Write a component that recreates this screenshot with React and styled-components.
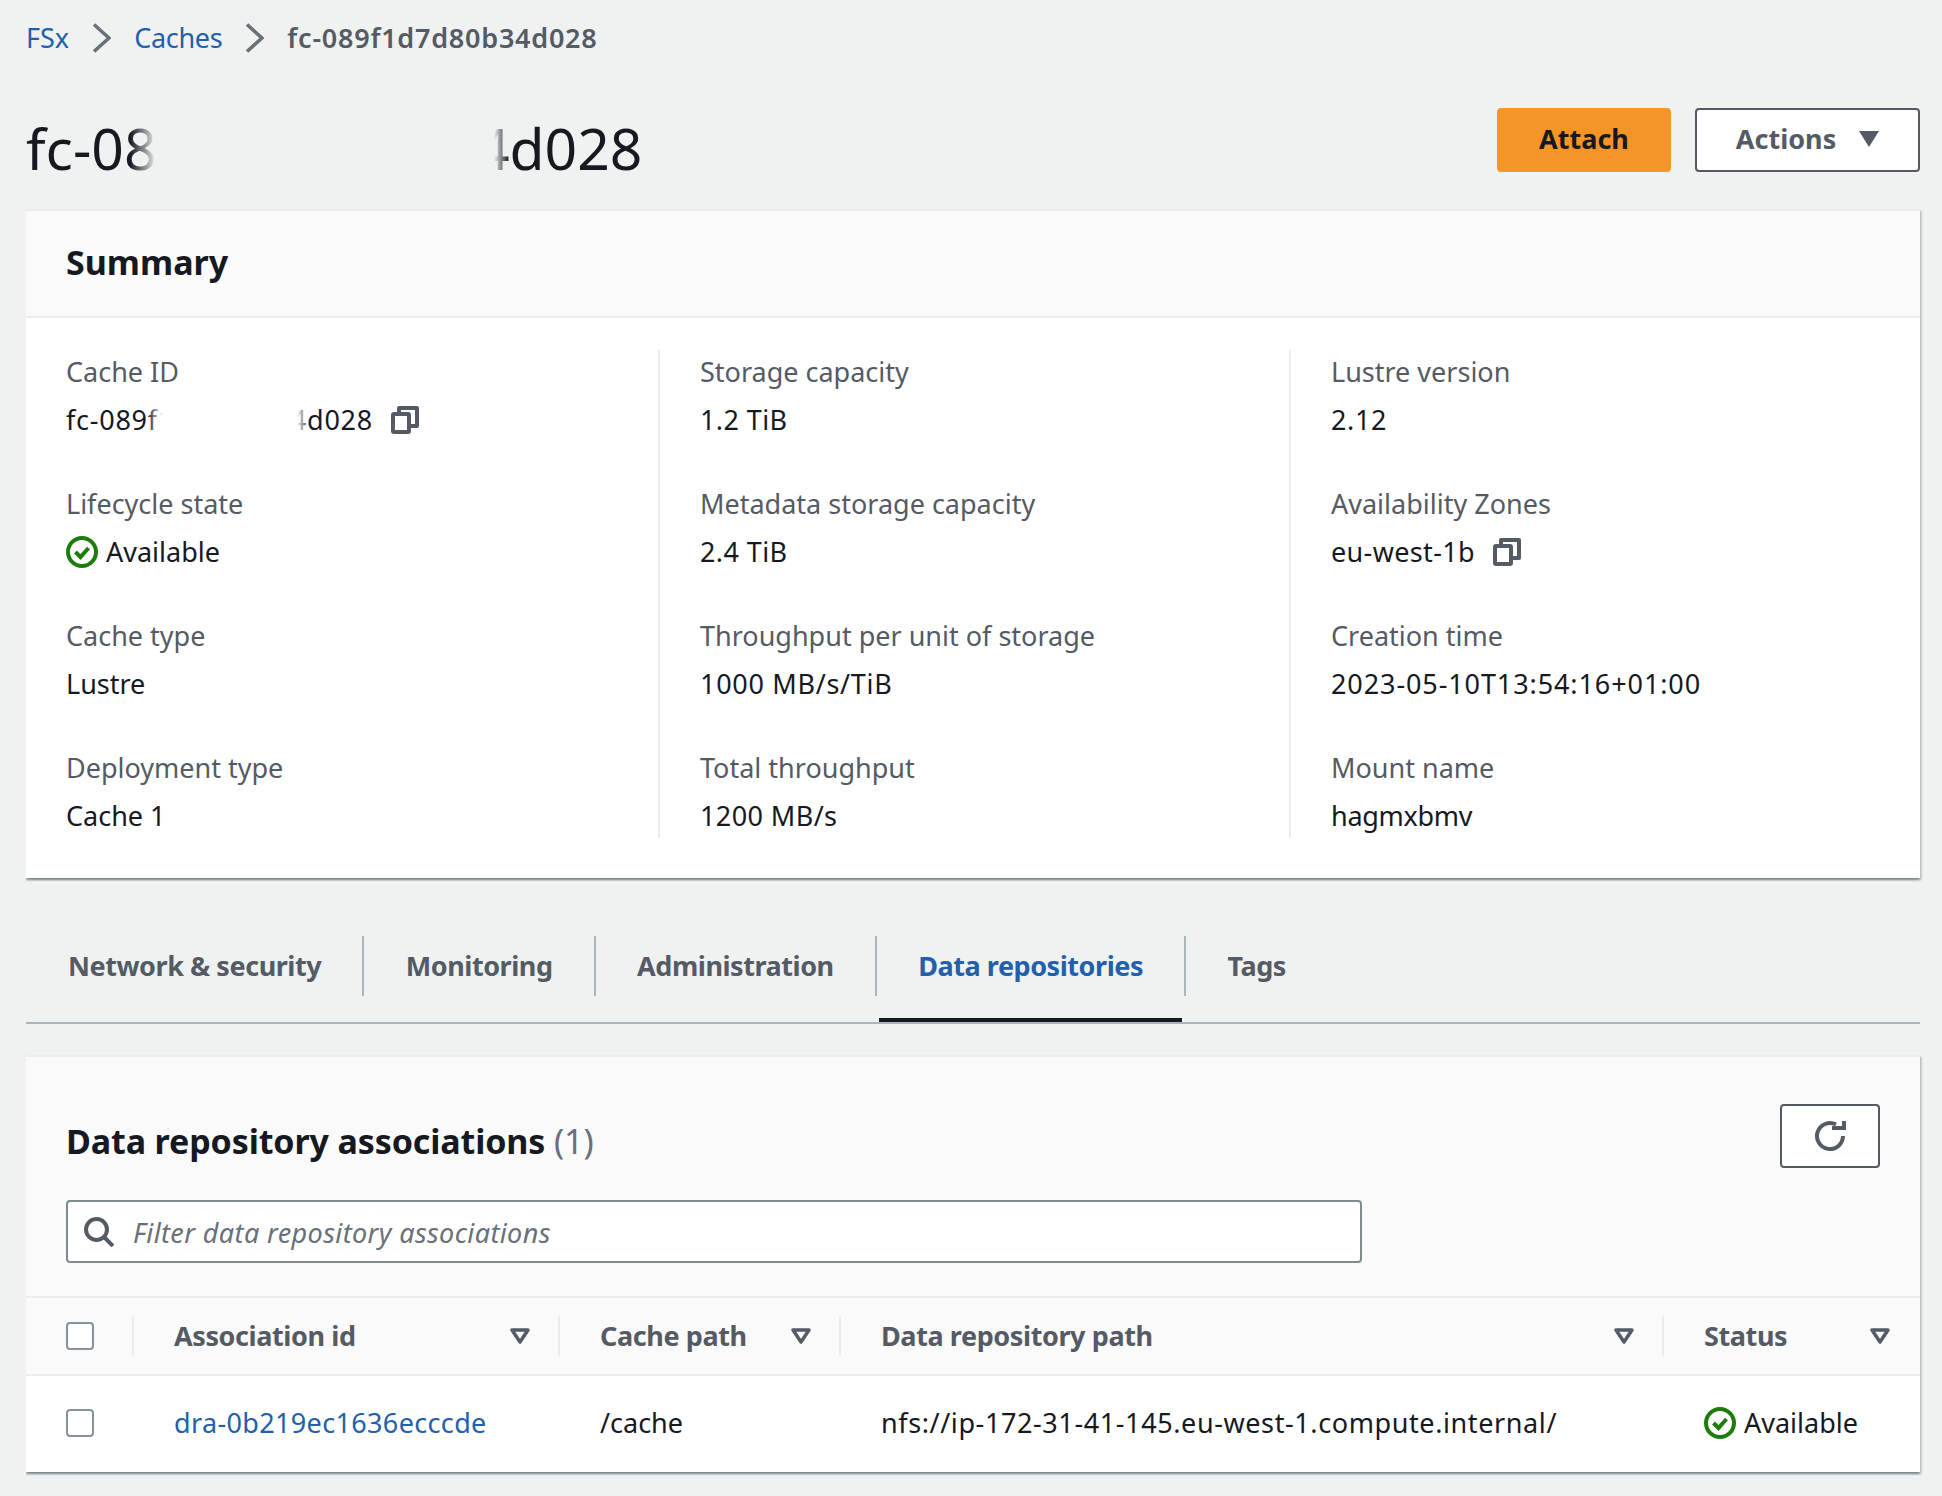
import styled, { createGlobalStyle } from 'styled-components'

const GlobalStyle = createGlobalStyle`
  html, body {
    margin: 0;
    background: #f0f2f2;
  }
  body {
    font-family: "Noto Sans", Roboto, Arial, sans-serif;
    font-size: 27px;
    line-height: 40px;
    color: #16191f;
  }
`

const CopyIcon = () => (
  <CopyGlyph viewBox="0 0 28 28" fill="none" stroke="#545b64" strokeWidth="4" strokeLinejoin="round">
    <path d="M8 7V2h18v18h-7" />
    <rect x="2" y="8" width="16" height="18" rx="1" />
  </CopyGlyph>
)

const StatusOk = () => (
  <StatusGlyph viewBox="0 0 32 32" fill="none" stroke="#1d7d0a">
    <circle cx="16" cy="16" r="14" strokeWidth="4" />
    <path d="M9.5 16l5 5 8-9" strokeWidth="4" />
  </StatusGlyph>
)

const FilterIcon = () => (
  <FilterGlyph viewBox="0 0 20 16" fill="none" stroke="#545b64" strokeWidth="3.4" strokeLinejoin="round">
    <path d="M2 2h16l-8 12z" />
  </FilterGlyph>
)

const Chevron = () => (
  <ChevronGlyph viewBox="0 0 19 30" fill="none" stroke="#687078" strokeWidth="3.6">
    <path d="M2 1.5L17 15 2 28.5" />
  </ChevronGlyph>
)

const summary = [
  [
    { label: 'Cache ID', value: 'fc-089f1d7d80b34d028', kind: 'secret', track: 0.75 },
    { label: 'Lifecycle state', value: 'Available', kind: 'status' },
    { label: 'Cache type', value: 'Lustre' },
    { label: 'Deployment type', value: 'Cache 1' },
  ],
  [
    { label: 'Storage capacity', value: '1.2 TiB', track: 0.4 },
    { label: 'Metadata storage capacity', value: '2.4 TiB', track: 0.4 },
    { label: 'Throughput per unit of storage', value: '1000 MB/s/TiB', track: 0.7 },
    { label: 'Total throughput', value: '1200 MB/s', track: 0.4 },
  ],
  [
    { label: 'Lustre version', value: '2.12', track: 0.6 },
    { label: 'Availability Zones', value: 'eu-west-1b', kind: 'copy', track: 0.35 },
    { label: 'Creation time', value: '2023-05-10T13:54:16+01:00', track: 0.9 },
    { label: 'Mount name', value: 'hagmxbmv', track: -0.3 },
  ],
]

const tabs = ['Network & security', 'Monitoring', 'Administration', 'Data repositories', 'Tags']

const columns = [
  { title: 'Association id', width: 426, inset: 28 },
  { title: 'Cache path', width: 281, inset: 28 },
  { title: 'Data repository path', width: 823, inset: 28 },
  { title: 'Status', width: 258, inset: 30 },
]

const renderValue = ({ value, kind, track }) => {
  if (kind === 'status') {
    return (
      <ValueRow>
        <StatusOk />
        {value}
      </ValueRow>
    )
  }
  if (kind === 'secret') {
    return (
      <ValueRow $track={track}>
        <Masked>
          {value}
          <IdMask />
        </Masked>
        <CopyIcon />
      </ValueRow>
    )
  }
  if (kind === 'copy') {
    return (
      <ValueRow $track={track}>
        {value}
        <CopyIcon />
      </ValueRow>
    )
  }
  return <ValueRow $track={track}>{value}</ValueRow>
}

export default function App() {
  return (
    <Page>
      <GlobalStyle />
      <Breadcrumbs>
        <Crumb>FSx</Crumb>
        <Chevron />
        <Crumb $track={-0.3}>Caches</Crumb>
        <Chevron />
        <CurrentCrumb>fc-089f1d7d80b34d028</CurrentCrumb>
      </Breadcrumbs>

      <TitleBar>
        <Title>
          fc-089f1d7d80b34d028
          <TitleMask />
        </Title>
        <Actions>
          <PrimaryButton>Attach</PrimaryButton>
          <DropdownButton>
            Actions
            <Caret viewBox="0 0 20 16">
              <path d="M0 0h20L10 16z" fill="#545b64" />
            </Caret>
          </DropdownButton>
        </Actions>
      </TitleBar>

      <Panel>
        <PanelHeader>Summary</PanelHeader>
        <SummaryGrid>
          {summary.map((col, i) => (
            <SummaryColumn key={i}>
              {col.map((item) => (
                <div key={item.label}>
                  <Label>{item.label}</Label>
                  {renderValue(item)}
                </div>
              ))}
            </SummaryColumn>
          ))}
        </SummaryGrid>
      </Panel>

      <TabBar>
        {tabs.map((tab) => (
          <Tab key={tab} $active={tab === 'Data repositories'}>
            <TabLabel $active={tab === 'Data repositories'}>{tab}</TabLabel>
          </Tab>
        ))}
      </TabBar>

      <Panel>
        <TableHeader>
          <TableHeadTop>
            <TableTitle>
              Data repository associations <Count>(1)</Count>
            </TableTitle>
            <RefreshButton>
              <svg width="32" height="32" viewBox="0 0 32 32" fill="none" stroke="#545b64" strokeWidth="4">
                <path d="M29 16A13 13 0 1 1 22 4.5" />
                <path d="M18 8h12V1" strokeWidth="4" />
              </svg>
            </RefreshButton>
          </TableHeadTop>
          <FilterBox>
            <svg width="30" height="30" viewBox="0 0 30 30" fill="none" stroke="#545b64" strokeWidth="4">
              <circle cx="12.5" cy="12.5" r="10.5" />
              <path d="M20 20l9 9" />
            </svg>
            <Placeholder>Filter data repository associations</Placeholder>
          </FilterBox>
        </TableHeader>
        <HeadRow>
          <SelectCell>
            <Checkbox />
          </SelectCell>
          {columns.map((c) => (
            <HeadCell key={c.title} $width={c.width} $inset={c.inset}>
              {c.title}
              <FilterIcon />
            </HeadCell>
          ))}
        </HeadRow>
        <BodyRow>
          <SelectCell>
            <Checkbox />
          </SelectCell>
          <BodyCell $width={426}>
            <Crumb $track={0.35}>dra-0b219ec1636ecccde</Crumb>
          </BodyCell>
          <BodyCell $width={281}>/cache</BodyCell>
          <BodyCell $width={823} $track={0.6}>nfs://ip-172-31-41-145.eu-west-1.compute.internal/</BodyCell>
          <BodyCell $width={258}>
            <ValueRow>
              <StatusOk />
              Available
            </ValueRow>
          </BodyCell>
        </BodyRow>
      </Panel>
    </Page>
  )
}

const Page = styled.div`
  width: 1894px;
  margin-left: 26px;
  height: 1496px;
  overflow: hidden;
  padding-right: 22px;
`

const Breadcrumbs = styled.nav`
  display: flex;
  align-items: center;
  gap: 23px;
  height: 40px;
  padding-top: 18px;
`

const Crumb = styled.a`
  color: #2260ab;
  letter-spacing: ${(p) => p.$track || 0}px;
`

const CurrentCrumb = styled.span`
  color: #545b64;
  font-weight: 600;
  letter-spacing: 0.75px;
`

const ChevronGlyph = styled.svg`
  width: 19px;
  height: 30px;
`

const TitleBar = styled.header`
  display: flex;
  justify-content: space-between;
  margin-top: 50px;
  height: 101px;
`

const Title = styled.h1`
  position: relative;
  margin: 0;
  padding-top: 8px;
  height: 64px;
  font-size: 57px;
  line-height: 64px;
  font-weight: 400;
`

const TitleMask = styled.span`
  position: absolute;
  left: 104px;
  top: 0;
  width: 379px;
  height: 100%;
  background: linear-gradient(to right, rgba(240, 242, 242, 0), #f0f2f2 7%, #f0f2f2 96%, rgba(240, 242, 242, 0));
`

const Actions = styled.div`
  display: flex;
  gap: 24px;
  align-items: flex-start;
`

const PrimaryButton = styled.button`
  width: 174px;
  height: 64px;
  padding: 0 0 2px;
  border: 0;
  border-radius: 4px;
  background: #f59527;
  color: #16191f;
  font: 700 27px/40px "Noto Sans", sans-serif;
`

const DropdownButton = styled.button`
  display: flex;
  align-items: center;
  justify-content: center;
  gap: 23px;
  width: 225px;
  height: 64px;
  padding: 0 0 2px;
  border: 2px solid #545b64;
  border-radius: 4px;
  background: #fff;
  color: #545b64;
  font: 700 27px/40px "Noto Sans", sans-serif;
`

const Caret = styled.svg`
  width: 20px;
  height: 16px;
`

const Panel = styled.section`
  background: #fff;
  border-top: 2px solid #eaeded;
  box-shadow: 0 2px 2px rgba(0, 28, 36, 0.3), 2px 2px 2px rgba(0, 28, 36, 0.15), -2px 2px 2px rgba(0, 28, 36, 0.15);
`

const PanelHeader = styled.h2`
  margin: 0;
  height: 105px;
  padding: 0 40px;
  background: #fafafa;
  border-bottom: 2px solid #eaeded;
  font-size: 34px;
  line-height: 103px;
  font-weight: 700;
`

const SummaryGrid = styled.div`
  display: grid;
  grid-template-columns: 632px 631px 1fr;
  padding: 32px 0 40px;
`

const SummaryColumn = styled.div`
  display: flex;
  flex-direction: column;
  gap: 44px;
  padding: 2px 0 2px 40px;

  & + & {
    border-left: 2px solid #eaeded;
  }
`

const Label = styled.div`
  margin-bottom: 8px;
  color: #545b64;
`

const ValueRow = styled.div`
  display: flex;
  align-items: center;
  gap: 8px;
  letter-spacing: ${(p) => p.$track || 0}px;
`

const Masked = styled.span`
  position: relative;
`

const IdMask = styled.span`
  position: absolute;
  left: 81px;
  top: 0;
  width: 163px;
  height: 100%;
  background: linear-gradient(to right, rgba(255, 255, 255, 0), #fff 10%, #fff 92%, rgba(255, 255, 255, 0));
`

const CopyGlyph = styled.svg`
  width: 28px;
  height: 28px;
  margin-left: 10px;
`

const StatusGlyph = styled.svg`
  width: 32px;
  height: 32px;
`

const TabBar = styled.div`
  display: flex;
  height: 146px;
  padding-top: 58px;
  box-sizing: border-box;
  border-bottom: 2px solid #aab7b8;
  margin-bottom: 31px;
`

const Tab = styled.div`
  position: relative;
  height: 60px;
  padding: 0 41px 0 41.5px;
  color: #545b64;
  font-weight: 700;
  line-height: 60px;
  letter-spacing: -0.45px;

  &:first-child {
    padding-left: 42px;
  }

  & + & {
    border-left: 2px solid #aab7b8;
  }
`

const TabLabel = styled.span`
  color: ${(p) => (p.$active ? '#2260ab' : '#545b64')};

  &::after {
    content: '';
    display: ${(p) => (p.$active ? 'block' : 'none')};
    position: absolute;
    left: 2px;
    right: 2px;
    top: 82px;
    height: 4px;
    background: #16191f;
  }
`

const TableHeader = styled.div`
  background: #fafafa;
  padding: 47px 40px 33px;
  border-bottom: 2px solid #eaeded;
`

const TableHeadTop = styled.div`
  display: flex;
  justify-content: space-between;
  align-items: flex-start;
  height: 96px;
`

const TableTitle = styled.h2`
  margin: 11px 0 0;
  font-size: 34px;
  line-height: 52px;
  font-weight: 700;
  letter-spacing: -0.12px;
`

const Count = styled.span`
  color: #687078;
  font-weight: 400;
`

const RefreshButton = styled.button`
  display: flex;
  align-items: center;
  justify-content: center;
  width: 100px;
  height: 64px;
  padding: 0;
  border: 2px solid #545b64;
  border-radius: 4px;
  background: #fff;
`

const FilterBox = styled.div`
  display: flex;
  align-items: center;
  gap: 19px;
  width: 1296px;
  height: 63px;
  padding-left: 16px;
  box-sizing: border-box;
  border: 2px solid #7f8c8d;
  border-radius: 4px;
  background: #fff;
`

const Placeholder = styled.span`
  color: #687078;
  font-style: italic;
  letter-spacing: 0.4px;
  padding-top: 2px;
`

const HeadRow = styled.div`
  display: flex;
  align-items: center;
  height: 76px;
  background: #fafafa;
  border-bottom: 2px solid #eaeded;
`

const BodyRow = styled.div`
  display: flex;
  align-items: center;
  height: 96px;
  padding-bottom: 2px;
  box-sizing: border-box;
  background: #fff;
`

const SelectCell = styled.div`
  display: flex;
  width: 106px;
  padding-left: 40px;
  box-sizing: border-box;
`

const Checkbox = styled.span`
  width: 28px;
  height: 28px;
  box-sizing: border-box;
  border: 2px solid #879596;
  border-radius: 4px;
  background: #fff;
`

const HeadCell = styled.div`
  position: relative;
  display: flex;
  align-items: center;
  justify-content: space-between;
  width: ${(p) => p.$width}px;
  padding: 0 ${(p) => p.$inset}px 0 42px;
  box-sizing: border-box;
  color: #545b64;
  font-weight: 700;
  letter-spacing: -0.4px;

  &::before {
    content: '';
    position: absolute;
    left: 0;
    top: 0;
    width: 2px;
    height: 40px;
    background: #eaeded;
  }
`

const BodyCell = styled.div`
  width: ${(p) => p.$width}px;
  padding-left: 42px;
  box-sizing: border-box;
  letter-spacing: ${(p) => p.$track || 0}px;
`

const FilterGlyph = styled.svg`
  width: 20px;
  height: 16px;
`
